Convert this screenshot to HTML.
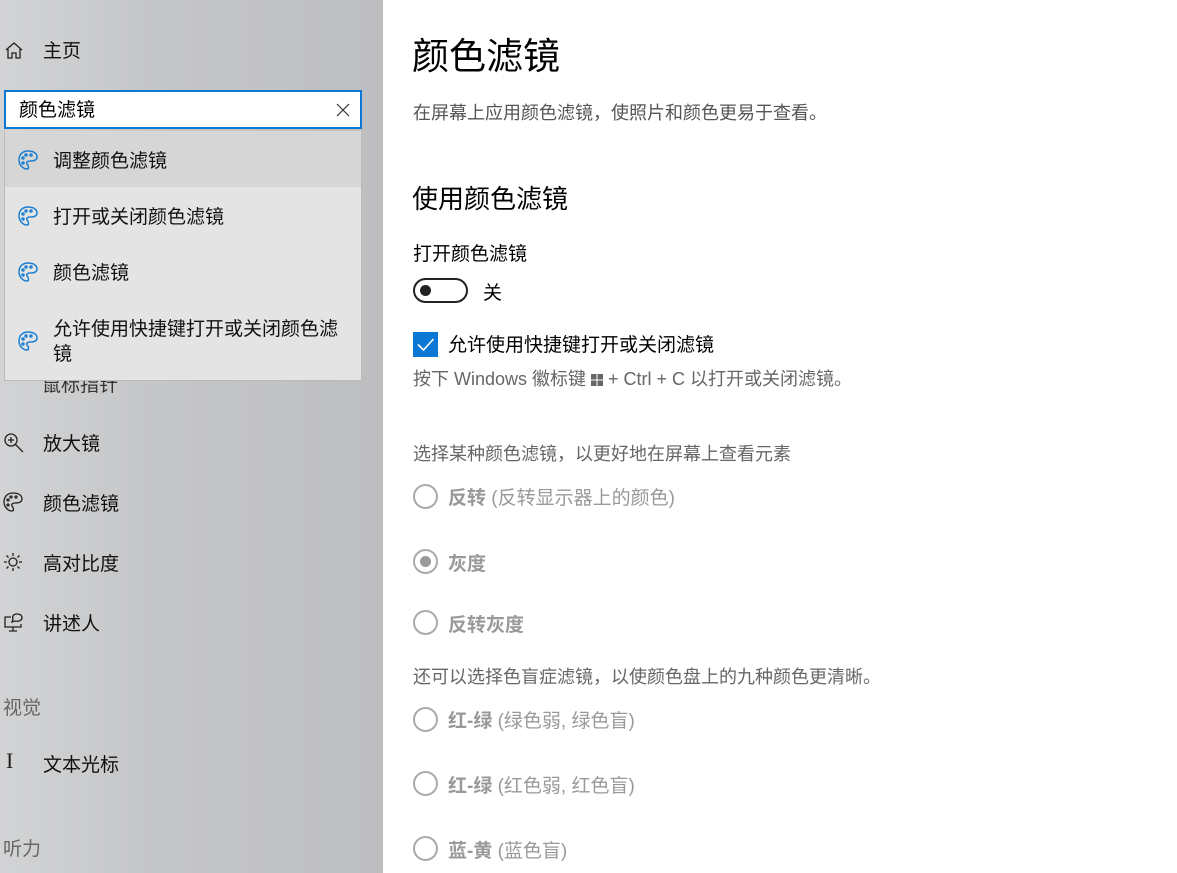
<!DOCTYPE html>
<html><head><meta charset="utf-8"><style>
*{margin:0;padding:0;box-sizing:border-box}
body{width:1177px;height:873px;overflow:hidden;background:#fff;font-family:"Liberation Sans","Noto Sans CJK SC",sans-serif;color:#000;position:relative}
.side{position:absolute;left:0;top:0;width:383px;height:873px;background:linear-gradient(90deg,#d2d3d5 0%,#c5c6c8 40%,#bdbec0 100%)}
.a{position:absolute;white-space:nowrap}
.nav{font-size:19px;color:#111}
.ico{position:absolute}
.search{position:absolute;left:4px;top:90px;width:358px;height:39px;background:#fff;border:2px solid #0a78d4}
.dd{position:absolute;left:4px;top:131px;width:358px;height:250px;background:#e4e4e4;border:1px solid #bbb;border-top:none}
.dd .it{position:absolute;left:0;width:356px;font-size:19px;color:#111}
.gray{color:#777}
.radio{position:absolute;width:25px;height:25px;border:2px solid #aaa;border-radius:50%}
.rl{font-size:19px;color:#999}
.rl b{font-weight:bold;color:#999}
</style></head><body>
<div class="side">
  <svg class="ico" style="left:4px;top:41px" width="20" height="20" viewBox="0 0 20 20" fill="none" stroke="#222" stroke-width="1.3"><path d="M2 9 L10 2 L18 9 M4 8 V17 H8 V12 H12 V17 H16 V8"/></svg>
  <div class="a nav" style="left:43px;top:36px">主页</div>

  <div class="a nav" style="left:42px;top:370px;color:#333">鼠标指针</div>
  <svg class="ico" style="left:3px;top:432px" width="22" height="22" viewBox="0 0 22 22" fill="none" stroke="#222" stroke-width="1.3"><circle cx="8" cy="8" r="6"/><path d="M12.5 12.5 L20 20 M5 8 H11 M8 5 V11"/></svg>
  <div class="a nav" style="left:43px;top:429px">放大镜</div>
  <svg class="ico" style="left:2px;top:491px" width="22" height="22" viewBox="0 0 22 22" fill="none" stroke="#222" stroke-width="1.3"><path d="M11 2 C5 2 2 6 2 11 C2 16 6 20 10 20 C12 20 12 17 10 15 C9 13 11 12 13 12 C17 12 20 11 20 8 C20 4 16 2 11 2 Z"/><circle cx="6" cy="9" r="1"/><circle cx="9" cy="6" r="1"/><circle cx="14" cy="6" r="1"/><circle cx="6" cy="14" r="1"/></svg>
  <div class="a nav" style="left:43px;top:489px">颜色滤镜</div>
  <svg class="ico" style="left:3px;top:552px" width="20" height="20" viewBox="0 0 20 20" fill="none" stroke="#222" stroke-width="1.3"><circle cx="10" cy="10" r="4"/><path d="M10 1V4M10 16V19M1 10H4M16 10H19M3.5 3.5L5.5 5.5M14.5 14.5L16.5 16.5M3.5 16.5L5.5 14.5M14.5 5.5L16.5 3.5"/></svg>
  <div class="a nav" style="left:43px;top:549px">高对比度</div>
  <svg class="ico" style="left:3px;top:612px" width="22" height="22" viewBox="0 0 22 22" fill="none" stroke="#222" stroke-width="1.3"><path d="M8 5 H2 V15 H18 V12 M10 15 V19 M6 19 H14"/><path d="M14 2 C10 2 9 5 10 7 L9 10 L12 9 C16 10 19 8 19 6 C19 3 17 2 14 2Z"/></svg>
  <div class="a nav" style="left:43px;top:609px">讲述人</div>
  <div class="a nav" style="left:3px;top:693px;color:#666">视觉</div>
  <div class="a" style="left:6px;top:748px;font-size:22px;color:#222;font-family:'Liberation Serif',serif">I</div>
  <div class="a nav" style="left:43px;top:750px">文本光标</div>
  <div class="a nav" style="left:3px;top:834px;color:#666">听力</div>

  <div class="dd">
    <div class="it" style="top:0;height:56px;background:#d6d6d6"></div>
  </div>
  <div class="search"></div>
  <div class="a" style="left:19px;top:95px;font-size:19px">颜色滤镜</div>
  <svg class="ico" style="left:336px;top:103px" width="14" height="14" viewBox="0 0 14 14" stroke="#333" stroke-width="1.2"><path d="M1 1L13 13M13 1L1 13"/></svg>
  <svg style="position:absolute;left:0;top:0" width="383" height="873">
    <defs><g id="pal" fill="none" stroke="#1a7fd4" stroke-width="1.5"><path d="M11 2 C5 2 2 6 2 11 C2 16 6 20 10 20 C12 20 12 17 10 15 C9 13 11 12 13 12 C17 12 20 11 20 8 C20 4 16 2 11 2 Z"/><circle cx="6" cy="9" r="1"/><circle cx="9" cy="6" r="1"/><circle cx="14" cy="6" r="1"/><circle cx="6" cy="14" r="1"/></g></defs>
    <use href="#pal" x="17" y="149"/><use href="#pal" x="17" y="205"/><use href="#pal" x="17" y="261"/><use href="#pal" x="17" y="330"/>
  </svg>
  <div class="a nav" style="left:53px;top:146px">调整颜色滤镜</div>
  <div class="a nav" style="left:53px;top:202px">打开或关闭颜色滤镜</div>
  <div class="a nav" style="left:53px;top:258px">颜色滤镜</div>
  <div class="a nav" style="left:53px;top:314px">允许使用快捷键打开或关闭颜色滤</div>
  <div class="a nav" style="left:53px;top:339px">镜</div>
</div>

<div class="a" style="left:412px;top:26px;font-size:37px">颜色滤镜</div>
<div class="a gray" style="left:413px;top:99px;font-size:18px;color:#555">在屏幕上应用颜色滤镜，使照片和颜色更易于查看。</div>
<div class="a" style="left:412px;top:179px;font-size:26px">使用颜色滤镜</div>
<div class="a" style="left:413px;top:239px;font-size:19px">打开颜色滤镜</div>
<div class="a" style="left:413px;top:278px;width:55px;height:25px;border:2px solid #222;border-radius:13px"></div>
<div class="a" style="left:420px;top:285px;width:11px;height:11px;border-radius:50%;background:#222"></div>
<div class="a" style="left:483px;top:278px;font-size:19px">关</div>
<div class="a" style="left:413px;top:332px;width:25px;height:25px;background:#0a78d4"></div>
<svg class="ico" style="left:413px;top:332px" width="25" height="25" viewBox="0 0 25 25" fill="none" stroke="#fff" stroke-width="1.6"><path d="M5 12.5 L10.5 18 L20.5 7"/></svg>
<div class="a" style="left:448px;top:330px;font-size:19px">允许使用快捷键打开或关闭滤镜</div>
<div class="a" style="left:413px;top:365px;font-size:18px;color:#666">按下 Windows 徽标键 <span style="display:inline-block;width:12px;height:12px;background:linear-gradient(90deg,#666 45%,transparent 45%,transparent 55%,#666 55%);vertical-align:-1px;-webkit-mask:linear-gradient(#000 45%,transparent 45%,transparent 55%,#000 55%)"></span> + Ctrl + C 以打开或关闭滤镜。</div>
<div class="a" style="left:413px;top:440px;font-size:18px;color:#666">选择某种颜色滤镜，以更好地在屏幕上查看元素</div>
<div class="radio" style="left:413px;top:484px"></div>
<div class="a rl" style="left:448px;top:483px"><b>反转</b> (反转显示器上的颜色)</div>
<div class="radio" style="left:413px;top:549px"></div>
<div class="a" style="left:420px;top:556px;width:11px;height:11px;border-radius:50%;background:#999"></div>
<div class="a rl" style="left:448px;top:549px"><b>灰度</b></div>
<div class="radio" style="left:413px;top:610px"></div>
<div class="a rl" style="left:448px;top:610px"><b>反转灰度</b></div>
<div class="a" style="left:413px;top:663px;font-size:18px;color:#666">还可以选择色盲症滤镜，以使颜色盘上的九种颜色更清晰。</div>
<div class="radio" style="left:413px;top:707px"></div>
<div class="a rl" style="left:448px;top:706px"><b>红-绿</b> (绿色弱, 绿色盲)</div>
<div class="radio" style="left:413px;top:771px"></div>
<div class="a rl" style="left:448px;top:771px"><b>红-绿</b> (红色弱, 红色盲)</div>
<div class="radio" style="left:413px;top:836px"></div>
<div class="a rl" style="left:448px;top:836px"><b>蓝-黄</b> (蓝色盲)</div>
</body></html>
